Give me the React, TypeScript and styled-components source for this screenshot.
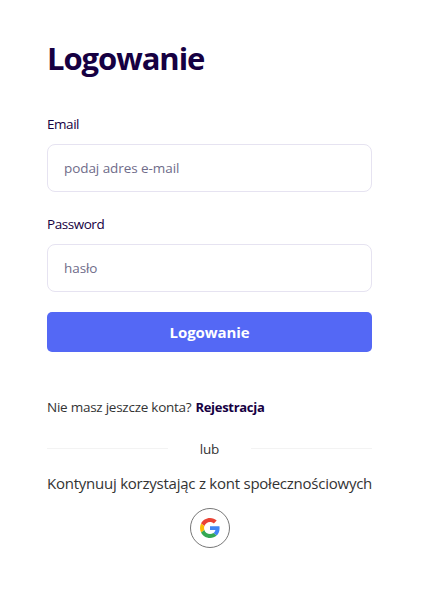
import React from "react";
import styled, { createGlobalStyle } from "styled-components";

const GlobalStyle = createGlobalStyle`
  * { box-sizing: border-box; }
  body {
    margin: 0;
    background: #fff;
    color: #333;
    font-family: "Open Sans", "Noto Sans", sans-serif;
  }
`;

const Page = styled.main`
  width: 424px;
  height: 599px;
  padding: 36px 52px 0 47px;
  overflow: hidden;
`;

const Title = styled.h1`
  margin: 0 0 35px;
  color: #160042;
  font-size: 31px;
  font-weight: 700;
  line-height: 44px;
  letter-spacing: -1.05px;
`;

const Form = styled.form`
  display: flex;
  flex-direction: column;
`;

const Field = styled.label`
  display: flex;
  flex-direction: column;
  gap: 11px;
  margin-bottom: 23px;
`;

const Label = styled.span`
  height: 18px;
  color: #160042;
  font-size: 13.5px;
  line-height: 18px;
  letter-spacing: -0.45px;
`;

const Input = styled.input`
  width: 100%;
  height: 48px;
  padding: 0 16px;
  border: 1px solid #e6e3f1;
  border-radius: 8px;
  outline: none;
  color: #160042;
  font-family: inherit;
  font-size: 13.5px;
  letter-spacing: -0.07px;

  &::placeholder {
    color: #6f6c8a;
    opacity: 1;
  }
`;

const SubmitButton = styled.button`
  height: 40px;
  margin-top: -3px;
  padding: 0;
  border: 0;
  border-radius: 5px;
  background: #5468f5;
  color: #fff;
  font-family: inherit;
  font-size: 15px;
  font-weight: 700;
  line-height: 40px;
  letter-spacing: -0.1px;
`;

const Register = styled.p`
  display: flex;
  gap: 4px;
  margin: 45px 0 0;
  font-size: 13.5px;
  line-height: 20px;
  letter-spacing: -0.25px;
  white-space: nowrap;
`;

const RegisterLink = styled.a`
  color: #160042;
  font-size: 13px;
  font-weight: 700;
  letter-spacing: -0.3px;
`;

const Divider = styled.div`
  display: grid;
  grid-template-columns: 121px 1fr 121px;
  align-items: center;
  height: 20px;
  margin-top: 22px;
  font-size: 13.5px;
  line-height: 20px;
  letter-spacing: -0.2px;
  text-align: center;
`;

const Line = styled.span`
  height: 1px;
  margin-bottom: 1px;
  background: #f3f3f3;
`;

const Social = styled.section`
  display: flex;
  flex-direction: column;
  align-items: center;
  margin-top: 12px;
`;

const SocialText = styled.p`
  width: 100%;
  margin: 0;
  font-size: 15px;
  line-height: 24px;
  letter-spacing: -0.24px;
  white-space: nowrap;
`;

const GoogleButton = styled.button`
  display: flex;
  align-items: center;
  justify-content: center;
  width: 40px;
  height: 40px;
  margin-top: 13px;
  padding: 0;
  border: 1px solid #777;
  border-radius: 50%;
  background: #fff;
`;

const GoogleIcon = () => (
  <svg width="20" height="20" viewBox="0 0 48 48" aria-hidden="true">
    <path fill="#EA4335" d="M24 9.5c3.54 0 6.71 1.22 9.21 3.6l6.85-6.85C35.9 2.38 30.47 0 24 0 14.62 0 6.51 5.38 2.56 13.22l7.98 6.19C12.43 13.72 17.74 9.5 24 9.5z" />
    <path fill="#4285F4" d="M46.98 24.55c0-1.57-.15-3.09-.38-4.55H24v9.02h12.94c-.58 2.96-2.26 5.48-4.78 7.18l7.73 6c4.51-4.18 7.09-10.36 7.09-17.65z" />
    <path fill="#FBBC05" d="M10.53 28.59c-.48-1.45-.76-2.99-.76-4.59s.27-3.14.76-4.59l-7.98-6.19C.92 16.46 0 20.12 0 24c0 3.88.92 7.54 2.56 10.78l7.97-6.19z" />
    <path fill="#34A853" d="M24 48c6.48 0 11.93-2.13 15.89-5.81l-7.73-6c-2.15 1.45-4.92 2.3-8.16 2.3-6.26 0-11.57-4.22-13.47-9.91l-7.98 6.19C6.51 42.62 14.62 48 24 48z" />
  </svg>
);

export default function App() {
  return (
    <>
      <GlobalStyle />
      <Page>
        <Title>Logowanie</Title>
        <Form onSubmit={(e) => e.preventDefault()}>
          <Field>
            <Label>Email</Label>
            <Input type="email" placeholder="podaj adres e-mail" />
          </Field>
          <Field>
            <Label>Password</Label>
            <Input type="password" placeholder="hasło" />
          </Field>
          <SubmitButton type="submit">Logowanie</SubmitButton>
        </Form>
        <Register>
          <span>Nie masz jeszcze konta?</span>
          <RegisterLink>Rejestracja</RegisterLink>
        </Register>
        <Divider>
          <Line />
          <span>lub</span>
          <Line />
        </Divider>
        <Social>
          <SocialText>Kontynuuj korzystając z kont społecznościowych</SocialText>
          <GoogleButton type="button" aria-label="Google">
            <GoogleIcon />
          </GoogleButton>
        </Social>
      </Page>
    </>
  );
}
